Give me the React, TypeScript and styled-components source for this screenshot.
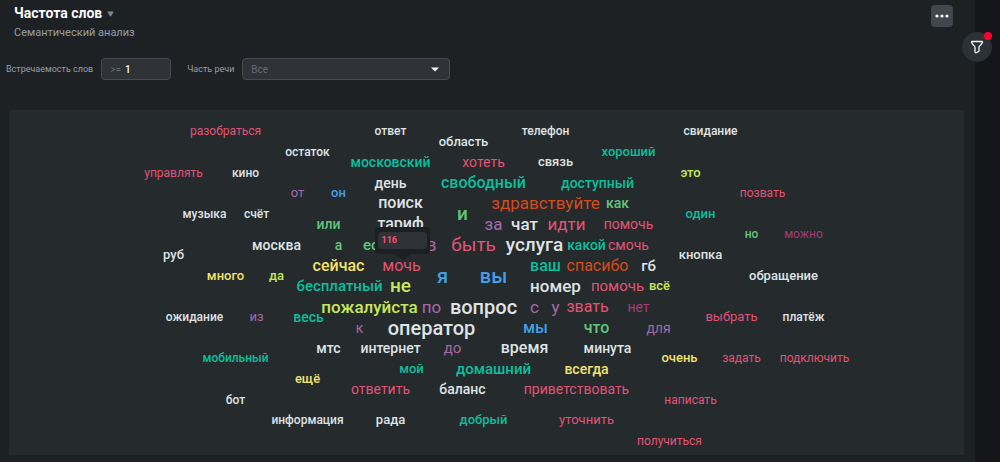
import React from 'react';
import styled, { createGlobalStyle } from 'styled-components';

const GlobalStyle = createGlobalStyle`
  *, *::before, *::after { box-sizing: border-box; }
  body { margin: 0; background: #15161a; font-family: Roboto, "Noto Sans", sans-serif; }
`;

const Page = styled.div`
  position: relative;
  display: flex;
  min-height: 100vh;
  background: #15161a;
`;

const Panel = styled.main`
  flex: 1;
  min-width: 0;
  display: flex;
  flex-direction: column;
  padding: 4px 11px 7px 9px;
  background: #1d2124;
`;

const SideRail = styled.aside`
  width: 25px;
  background: #15161a;
`;

const Header = styled.header`
  display: flex;
  justify-content: space-between;
  align-items: flex-start;
  padding: 0 11px 0 5px;
`;

const Title = styled.h1`
  display: flex;
  align-items: center;
  gap: 5px;
  margin: 0;
  font-size: 14px;
  line-height: 19px;
  font-weight: 700;
  color: #fafafa;
`;

const TitleCaret = styled.button`
  display: flex;
  padding: 0;
  border: 0;
  background: none;
  color: #7c8791;
`;

const Subtitle = styled.p`
  margin: 0;
  font-size: 11px;
  line-height: 20px;
  color: #969fa8;
`;

const MoreButton = styled.button`
  display: flex;
  align-items: center;
  justify-content: center;
  width: 22px;
  height: 22px;
  margin-top: 1px;
  padding: 0;
  border: 0;
  border-radius: 4px;
  background: #41474d;
  color: #fafafa;
`;

const Filters = styled.form`
  display: flex;
  align-items: center;
  gap: 16px;
  margin: 15px 0 30px -3px;
`;

const Field = styled.label`
  display: flex;
  align-items: center;
  gap: 8px;
  font-size: 9px;
  color: #969fa8;
  white-space: nowrap;
`;

const Control = styled.span<{ $width: number }>`
  display: flex;
  align-items: center;
  gap: 4px;
  width: ${(p) => p.$width}px;
  height: 22px;
  padding: 0 10px 0 8px;
  border: 1px solid #464c52;
  border-radius: 4px;
  background: #2f3236;
  font-size: 10px;
  color: #626c77;
`;

const CountInput = styled.input`
  flex: 1;
  min-width: 0;
  padding: 0;
  border: 0;
  outline: 0;
  background: none;
  font: 500 10px Roboto, sans-serif;
  color: #fafafa;
`;

const Select = styled.select`
  flex: 1;
  min-width: 0;
  padding: 0;
  border: 0;
  outline: 0;
  appearance: none;
  background: none;
  font: 400 10px Roboto, sans-serif;
  color: #626c77;
`;

const Cloud = styled.section`
  position: relative;
  flex: 1;
  min-height: 345px;
  overflow: hidden;
  background: #252a2c;
`;

const Word = styled.span<{ $x: number; $y: number; $size: number; $color: string; $weight: number }>`
  position: absolute;
  left: calc(50% + ${(p) => p.$x}px);
  top: calc(50% + ${(p) => p.$y}px);
  transform: translate(-50%, -50%);
  font-size: ${(p) => p.$size}px;
  font-weight: ${(p) => p.$weight};
  line-height: 20px;
  white-space: nowrap;
  color: ${(p) => p.$color};
`;

const Tooltip = styled.div`
  position: absolute;
  left: calc(50% - 112px);
  top: calc(50% - 56px);
  width: 55px;
  padding: 5px 3px;
  border-radius: 4px;
  background: #1d2023;

  &::after {
    content: '';
    position: absolute;
    top: 100%;
    left: 20px;
    border: solid transparent;
    border-width: 6px 8px 0;
    border-top-color: #1d2023;
  }
`;

const TooltipValue = styled.div`
  padding: 0 4px;
  border-radius: 4px;
  background: #2f3236;
  font-size: 9px;
  line-height: 17px;
  font-weight: 700;
  color: #fa5070;
`;

const FilterButton = styled.button`
  position: absolute;
  top: 32px;
  right: 8px;
  display: flex;
  align-items: center;
  justify-content: center;
  width: 30px;
  height: 30px;
  padding: 0;
  border: 0;
  border-radius: 50%;
  background: #2c3135;
  color: #fafafa;
`;

const Badge = styled.span`
  position: absolute;
  top: 0;
  right: 0;
  width: 8px;
  height: 8px;
  border-radius: 50%;
  background: #ff0032;
`;

type Part = 'noun' | 'verb' | 'adj' | 'prep' | 'pron' | 'adv' | 'part' | 'conj' | 'intj' | 'neg';

const parts: Record<Part, { color: string; weight: number }> = {
  noun: { color: '#dfe3e6', weight: 500 },
  verb: { color: '#e25476', weight: 400 },
  adj: { color: '#0abf9e', weight: 500 },
  prep: { color: '#a66aaa', weight: 400 },
  pron: { color: '#429fe6', weight: 500 },
  adv: { color: '#f2e26c', weight: 500 },
  part: { color: '#c6e85c', weight: 500 },
  conj: { color: '#62c67a', weight: 500 },
  intj: { color: '#d64a1e', weight: 400 },
  neg: { color: '#a63c76', weight: 400 },
};

type Entry = [text: string, x: number, y: number, size: number, part: Part];

const words: Entry[] = [
  ['разобраться', -261, -152, 12, 'verb'],
  ['ответ', -96, -152, 12, 'noun'],
  ['телефон', 59, -152, 12, 'noun'],
  ['свидание', 224, -152, 12, 'noun'],
  ['область', -23, -141, 13, 'noun'],
  ['остаток', -179, -131, 12, 'noun'],
  ['хороший', 142, -131, 13, 'adj'],
  ['московский', -96, -121, 14, 'adj'],
  ['хотеть', -3, -121, 14, 'verb'],
  ['связь', 69, -121, 13, 'noun'],
  ['управлять', -313, -110, 12, 'verb'],
  ['кино', -241, -110, 12, 'noun'],
  ['это', 204, -110, 13, 'part'],
  ['день', -96, -100, 14, 'noun'],
  ['свободный', -3, -100, 16, 'adj'],
  ['доступный', 111, -100, 14, 'adj'],
  ['от', -189, -90, 13, 'prep'],
  ['он', -148, -90, 13, 'pron'],
  ['позвать', 276, -90, 12, 'verb'],
  ['поиск', -86, -80, 16, 'noun'],
  ['здравствуйте', 59, -80, 17, 'intj'],
  ['как', 131, -80, 14, 'conj'],
  ['музыка', -282, -69, 12, 'noun'],
  ['счёт', -230, -69, 12, 'noun'],
  ['и', -24, -69, 19, 'conj'],
  ['один', 214, -69, 13, 'adj'],
  ['или', -158, -59, 14, 'conj'],
  ['тариф', -86, -59, 16, 'noun'],
  ['за', 7, -59, 17, 'prep'],
  ['чат', 38, -59, 17, 'noun'],
  ['идти', 80, -59, 17, 'verb'],
  ['помочь', 142, -59, 14, 'verb'],
  ['но', 265, -49, 12, 'conj'],
  ['можно', 317, -49, 12, 'neg'],
  ['москва', -210, -38, 14, 'noun'],
  ['а', -148, -38, 14, 'conj'],
  ['если', -107, -38, 15, 'conj'],
  ['в', -55, -38, 18, 'prep'],
  ['быть', -13, -38, 19, 'verb'],
  ['услуга', 48, -38, 19, 'noun'],
  ['какой', 100, -38, 14, 'adj'],
  ['смочь', 142, -38, 14, 'verb'],
  ['руб', -313, -28, 13, 'noun'],
  ['кнопка', 214, -28, 13, 'noun'],
  ['сейчас', -148, -17, 16, 'adv'],
  ['мочь', -85, -17, 16, 'verb'],
  ['ваш', 59, -17, 16, 'adj'],
  ['спасибо', 111, -17, 16, 'intj'],
  ['гб', 162, -17, 15, 'noun'],
  ['много', -261, -7, 13, 'adv'],
  ['да', -210, -7, 13, 'part'],
  ['я', -44, -7, 20, 'pron'],
  ['вы', 7, -7, 20, 'pron'],
  ['обращение', 297, -7, 13, 'noun'],
  ['бесплатный', -147, 3, 15, 'adj'],
  ['не', -86, 3, 19, 'part'],
  ['номер', 69, 3, 17, 'noun'],
  ['помочь', 131, 3, 15, 'verb'],
  ['всё', 173, 3, 13, 'part'],
  ['пожалуйста', -117, 24, 17, 'part'],
  ['по', -55, 24, 17, 'prep'],
  ['вопрос', -3, 24, 20, 'noun'],
  ['с', 48, 24, 17, 'prep'],
  ['у', 69, 24, 17, 'prep'],
  ['звать', 101, 24, 16, 'verb'],
  ['нет', 152, 24, 14, 'neg'],
  ['ожидание', -292, 34, 12, 'noun'],
  ['из', -230, 34, 13, 'prep'],
  ['весь', -178, 34, 14, 'adj'],
  ['выбрать', 245, 34, 13, 'verb'],
  ['платёж', 317, 34, 12, 'noun'],
  ['к', -127, 45, 14, 'prep'],
  ['оператор', -55, 45, 20, 'noun'],
  ['мы', 49, 45, 16, 'pron'],
  ['что', 110, 45, 16, 'conj'],
  ['для', 172, 45, 14, 'prep'],
  ['мтс', -158, 65, 14, 'noun'],
  ['интернет', -96, 65, 14, 'noun'],
  ['до', -34, 65, 15, 'prep'],
  ['время', 38, 65, 16, 'noun'],
  ['минута', 121, 65, 14, 'noun'],
  ['мобильный', -251, 75, 12, 'adj'],
  ['очень', 193, 75, 13, 'adv'],
  ['задать', 255, 75, 12, 'verb'],
  ['подключить', 328, 75, 12, 'verb'],
  ['мой', -75, 86, 13, 'adj'],
  ['домашний', 7, 86, 15, 'adj'],
  ['всегда', 100, 86, 14, 'adv'],
  ['ещё', -179, 96, 13, 'adv'],
  ['ответить', -106, 106, 14, 'verb'],
  ['баланс', -24, 106, 14, 'noun'],
  ['приветствовать', 90, 106, 14, 'verb'],
  ['бот', -251, 117, 12, 'noun'],
  ['написать', 204, 117, 12, 'verb'],
  ['информация', -179, 137, 12, 'noun'],
  ['рада', -96, 137, 13, 'noun'],
  ['добрый', -3, 137, 13, 'adj'],
  ['уточнить', 100, 137, 13, 'verb'],
  ['получиться', 183, 158, 12, 'verb'],
];

export default function App() {
  return (
    <>
      <GlobalStyle />
      <Page>
        <Panel>
          <Header>
            <div>
              <Title>
                Частота слов
                <TitleCaret type="button" aria-label="Развернуть">
                  <svg width="7" height="6" viewBox="0 0 7 6"><path d="M.8.5h5.4q.5 0 .3.5L4.2 5q-.7.8-1.4 0L.5 1Q.3.5.8.5z" fill="currentColor" /></svg>
                </TitleCaret>
              </Title>
              <Subtitle>Семантический анализ</Subtitle>
            </div>
            <MoreButton type="button" aria-label="Меню">
              <svg width="14" height="4" viewBox="0 0 14 4" fill="currentColor">
                <circle cx="2" cy="2" r="1.6" />
                <circle cx="7" cy="2" r="1.6" />
                <circle cx="12" cy="2" r="1.6" />
              </svg>
            </MoreButton>
          </Header>
          <Filters>
            <Field>
              Встречаемость слов
              <Control $width={70}>
                &gt;=
                <CountInput type="text" defaultValue="1" />
              </Control>
            </Field>
            <Field>
              Часть речи
              <Control $width={208}>
                <Select defaultValue="all">
                  <option value="all">Все</option>
                </Select>
                <svg width="8" height="5" viewBox="0 0 8 5"><path d="M0 .5h8l-4 4z" fill="#fafafa" /></svg>
              </Control>
            </Field>
          </Filters>
          <Cloud>
            {words.map(([text, x, y, size, part]) => (
              <Word key={`${text}${x}`} $x={x} $y={y} $size={size} $color={parts[part].color} $weight={parts[part].weight}>
                {text}
              </Word>
            ))}
            <Tooltip role="tooltip">
              <TooltipValue>116</TooltipValue>
            </Tooltip>
          </Cloud>
        </Panel>
        <SideRail />
        <FilterButton type="button" aria-label="Фильтр">
          <svg width="14" height="14" viewBox="0 0 14 14" fill="none" stroke="currentColor" strokeWidth="1.3" strokeLinejoin="round">
            <path d="M1.5 2.1Q1.5 1.5 2.2 1.5H11.8Q12.5 1.5 12.5 2.1C12.5 4.6 9 5.1 9 7.3V11.2L6.3 12.7Q5 12.9 5 11.8V7.3C5 5.1 1.5 4.6 1.5 2.1Z" />
          </svg>
          <Badge />
        </FilterButton>
      </Page>
    </>
  );
}
